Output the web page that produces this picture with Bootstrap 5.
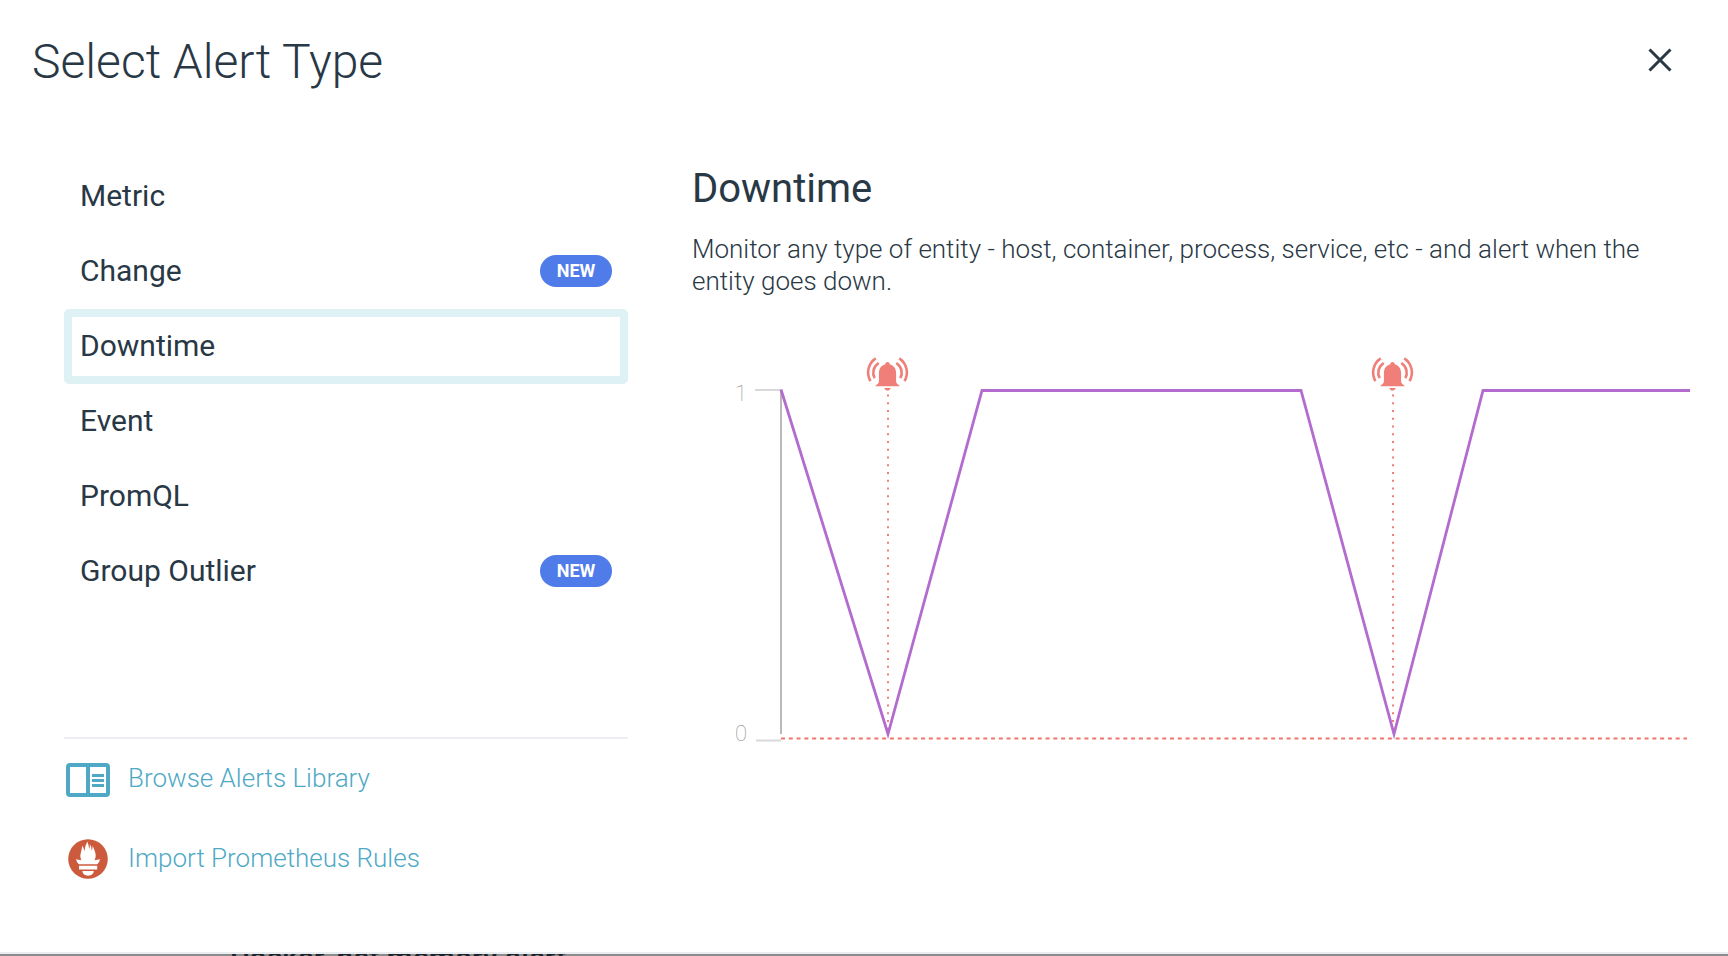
<!DOCTYPE html>
<html lang="en">
<head>
<meta charset="utf-8">
<meta name="viewport" content="width=device-width, initial-scale=1">
<title>Select Alert Type</title>
<link href="https://cdn.jsdelivr.net/npm/bootstrap@5.3.0/dist/css/bootstrap.min.css" rel="stylesheet">
<style>
  :root { --ink: #293845; --teal: #4fa9c6; }
  body { font-family: Roboto, "Open Sans", sans-serif; color: var(--ink); font-weight: 300; font-size: 26px; line-height: 32px; }
  .dialog-sheet { border-bottom: 2px solid #ebecf0; }
  .dialog-head { padding: 32px 56px 0 32px; }
  .dialog-title { font-size: 48px; line-height: 56px; padding-top: 2px; font-weight: 300; }
  .close-btn { width: 24px; height: 24px; color: var(--ink); margin-bottom: 2px; }
  .dialog-body { padding: 69px 36px 0 64px; column-gap: 64px; }
  .side-col { flex: 0 0 564px; }
  .type-item { height: 75px; padding: 0 8px 2px; border: 8px solid transparent; border-radius: 5px; background: #fff; color: var(--ink); font-size: 30px; line-height: 36px; font-weight: 400; text-align: left; }
  .type-item.selected { border-color: #def1f5; }
  .new-pill { width: 72px; height: 32px; border-radius: 16px; background: #507cea; color: #fff; font-size: 18px; line-height: 32px; font-weight: 700; text-align: center; }
  .side-links { margin-top: 128px; border-top: 2px solid #ededf2; padding-top: 22px; row-gap: 44px; }
  .side-links a { color: var(--teal); column-gap: 16px; height: 36px; }
  .side-links span { padding-bottom: 2px; }
  .link-icon { width: 48px; height: 40px; flex: none; }
  .detail-title { font-size: 40px; line-height: 48px; font-weight: 400; margin: 6px 0 20px; }
  .detail-text { margin: 0 0 53px; max-width: 980px; }
  .axis-text { font-size: 22px; font-weight: 100; fill: #8c8c8c; }
  .backdrop-strip { height: 2px; background: #8b8d8c; padding-left: 230px; }
  .backdrop-strip span { font-size: 30px; line-height: 40px; font-weight: 500; color: #18222b; padding-top: 6px; }
</style>
<script src="https://cdn.jsdelivr.net/npm/bootstrap@5.3.0/dist/js/bootstrap.bundle.min.js"></script>
</head>
<body class="vh-100 d-flex flex-column overflow-hidden bg-white">
<main class="dialog-sheet flex-grow-1 overflow-hidden">
  <header class="dialog-head d-flex justify-content-between align-items-center">
    <h1 class="dialog-title mb-0">Select Alert Type</h1>
    <button type="button" class="btn close-btn p-0 border-0 d-flex" aria-label="Close">
      <svg width="24" height="24" viewBox="0 0 24 24" fill="none" stroke="currentColor" stroke-width="3"><path d="M1.500 1.500 22.500 22.500M22.500 1.500 1.500 22.500"/></svg>
    </button>
  </header>
  <div class="dialog-body d-flex">
    <aside class="side-col">
      <nav class="d-flex flex-column" aria-label="Alert types">
        <button type="button" class="type-item d-flex justify-content-between align-items-center">Metric</button>
        <button type="button" class="type-item d-flex justify-content-between align-items-center">Change <span class="new-pill">NEW</span></button>
        <button type="button" class="type-item selected d-flex justify-content-between align-items-center" aria-current="true">Downtime</button>
        <button type="button" class="type-item d-flex justify-content-between align-items-center">Event</button>
        <button type="button" class="type-item d-flex justify-content-between align-items-center">PromQL</button>
        <button type="button" class="type-item d-flex justify-content-between align-items-center">Group Outlier <span class="new-pill">NEW</span></button>
      </nav>
      <div class="side-links d-flex flex-column">
        <a href="#" class="d-flex align-items-center text-decoration-none">
          <svg class="link-icon" viewBox="0 0 48 40" fill="none" stroke="currentColor">
            <rect x="4" y="6" width="40" height="30" rx="2" stroke-width="4"/>
            <path d="M24 5V37" stroke-width="4"/>
            <path d="M28 16.500H40M28 21.500H40M28 26.500H40" stroke-width="3"/>
          </svg>
          <span>Browse Alerts Library</span>
        </a>
        <a href="#" class="d-flex align-items-center text-decoration-none">
          <svg class="link-icon" viewBox="0 0 48 40">
            <circle cx="24" cy="20" r="19.800" fill="#cc5a3c"/>
            <path fill="#fff" d="M17.300 21.300C16.500 19 16 17 16.600 14.800 17.200 12 18.200 9.800 18 6.800 19.300 8 20 10 20.200 12.200 21.200 10 21 8 21.600 6.500 22.200 5 23 4 23.200 2.400 24.400 4.500 24.800 7 25.200 10 25.800 8.500 26 7.300 25.800 5.600 27 6.800 27.500 9 27.800 11.800 28.500 10 28.600 8.500 28.400 6.800 29.800 9 30.800 12 31.500 14.500 32 17 31.500 19 30.600 21.300L36 20.300C35.400 22.700 34.600 24.200 33.200 25.300H15C13.400 24 12.600 22.600 12 20.300ZM15 26.800H33.200V30.600H15ZM18.400 32H29.800C29.600 34.800 27 36.700 24.100 36.700 21.200 36.700 18.600 34.800 18.400 32Z"/>
          </svg>
          <span>Import Prometheus Rules</span>
        </a>
      </div>
    </aside>
    <section class="flex-grow-1">
      <h2 class="detail-title">Downtime</h2>
      <p class="detail-text">Monitor any type of entity - host, container, process, service, etc - and alert when the entity goes down.</p>
      <svg class="d-block w-100" viewBox="692 350 1000 400" role="img" aria-label="Uptime dropping from 1 to 0 twice, with an alert at each drop">
        <defs>
          <g id="alarm" fill="#ef7f78">
            <path d="M0 -14.500C1.300 -14.500 2 -13.600 2.200 -12.300 6 -11.200 8.600 -8 8.600 -3.500V5C8.600 6.600 9.800 7.600 11.800 8.800V9.800H-11.800V8.800C-9.800 7.600 -8.600 6.600 -8.600 5V-3.500C-8.600 -8 -6 -11.200 -2.200 -12.300 -2 -13.600 -1.300 -14.500 0 -14.500ZM-3.200 11.500H3.200C2.600 13.500 1.300 14 0 14S-2.600 13.500 -3.200 11.500Z"/>
            <path fill="none" stroke="#ef7f78" stroke-width="2.600" d="M-8.800 -13.500C-14.500 -9.500 -15.500 -3 -12.800 1.700M-11.800 -18.200C-19.500 -13 -21.500 -3 -17 4.600M8.800 -13.500C14.500 -9.500 15.500 -3 12.800 1.700M11.800 -18.200C19.500 -13 21.500 -3 17 4.600"/>
          </g>
        </defs>
        <path d="M755 390H781M756 740.500H781" stroke="#d9d9d9" stroke-width="2"/>
        <path d="M781 390V734" stroke="#b9b9b9" stroke-width="2"/>
        <text class="axis-text" x="735" y="401">1</text>
        <text class="axis-text" x="735" y="741">0</text>
        <path d="M888 394.500V730M1393 394.500V730" stroke="#ef7f78" stroke-width="2" stroke-dasharray="2 5.750"/>
        <path d="M781 738.500H1687" stroke="#f0756c" stroke-width="2.200" stroke-dasharray="4 3.780"/>
        <path d="M781 389.500 888 734 982 390.500H1301L1394 734 1483 390.500H1690" fill="none" stroke="#b36cce" stroke-width="2.800"/>
        <use href="#alarm" x="887.500" y="376.500"/>
        <use href="#alarm" x="1392.500" y="376.500"/>
      </svg>
    </section>
  </div>
</main>
<div class="backdrop-strip d-flex align-items-center overflow-hidden flex-shrink-0"><span class="text-nowrap">Docker, net memory alert</span></div>
</body>
</html>
